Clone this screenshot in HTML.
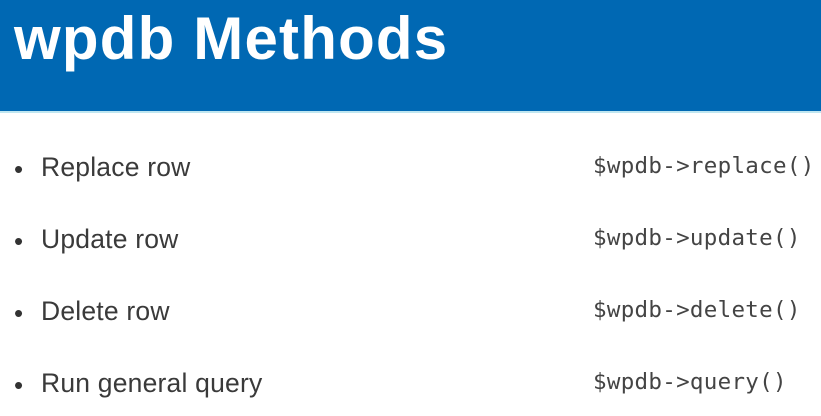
<!DOCTYPE html>
<html><head><style>
body{margin:0;width:821px;height:416px;background:#fff;overflow:hidden;position:relative;font-family:"Liberation Sans",sans-serif}
.hd{position:absolute;left:0;top:0;width:821px;height:111px;background:#0068b3;border-bottom:2px solid #bfe6f0}
.hd h1{margin:0;position:absolute;left:14px;top:4px;font-size:60px;font-weight:bold;color:#fff;letter-spacing:1.2px}
.row{position:absolute;left:0;width:821px;height:40px}
.b{position:absolute;left:14px;top:2px;font-size:26px;color:#333}
.t{position:absolute;left:41px;top:0;font-size:26.5px;color:#3a3a3a;letter-spacing:0.2px}
.c{position:absolute;left:593px;top:1px;font-family:"DejaVu Sans Mono","Liberation Mono",monospace;font-size:22.5px;color:#444;letter-spacing:0.3px}
</style></head><body>
<div class="hd"><h1>wpdb Methods</h1></div>
<div class="row" style="top:152px"><span class="b">•</span><span class="t">Replace row</span><span class="c">$wpdb-&gt;replace()</span></div>
<div class="row" style="top:224px"><span class="b">•</span><span class="t">Update row</span><span class="c">$wpdb-&gt;update()</span></div>
<div class="row" style="top:296px"><span class="b">•</span><span class="t">Delete row</span><span class="c">$wpdb-&gt;delete()</span></div>
<div class="row" style="top:368px"><span class="b">•</span><span class="t">Run general query</span><span class="c">$wpdb-&gt;query()</span></div>
</body></html>
